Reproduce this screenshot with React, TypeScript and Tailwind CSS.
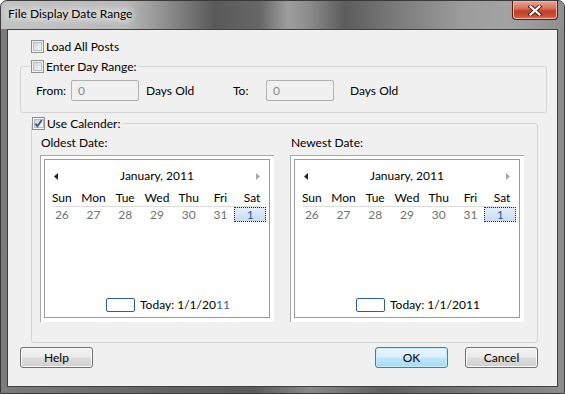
import React from "react";

function Check({ checked = false }: { checked?: boolean }) {
  return (
    <span className="flex h-[13px] w-[13px] shrink-0 border border-[#8e8f8f] bg-[#f4f4f4] p-px">
      <span className="flex flex-1 items-center justify-center border border-[#b9bdc2] bg-[linear-gradient(135deg,#cfd2d7_0%,#e4e6e9_55%,#f8f8f8_100%)]">
        {checked && (
          <svg width="9" height="9" viewBox="0 0 9 9" className="-ml-px -mt-px">
            <path d="M1.3 4.6 L3.4 7.2 L7.8 0.9" fill="none" stroke="#3d5a8f" strokeWidth="1.8" />
          </svg>
        )}
      </span>
    </span>
  );
}

function Input() {
  return (
    <div className="flex h-[21px] w-[68px] items-center rounded-[2px] border border-[#b0b0b0] bg-[#f0f0f0] pl-[6px] text-[#8a8a8a]">
      0
    </div>
  );
}

function Calendar({ label, blueToday }: { label: string; blueToday?: boolean }) {
  const days = ["Sun", "Mon", "Tue", "Wed", "Thu", "Fri", "Sat"];
  const dates = ["26", "27", "28", "29", "30", "31"];
  return (
    <div className="flex w-[234px] flex-col">
      <div className="h-[16px] pl-px leading-[16px]">{label}</div>
      <div className="mt-[4px] h-[167px] border-l border-t border-[#a9a9a9] bg-white pb-[4px] pl-[3px] pr-[4px] pt-[3px]">
        <div className="flex h-full flex-col border border-[#9b9b9b]">
          <div className="mt-[6px] flex h-[20px] items-center px-[9px]">
            <svg width="4" height="7" viewBox="0 0 4 7">
              <path d="M4 0 L0 3.5 L4 7 Z" fill="#222" />
            </svg>
            <div className="flex-1 text-center leading-[20px]">January, 2011</div>
            <svg width="4" height="7" viewBox="0 0 4 7">
              <path d="M0 0 L4 3.5 L0 7 Z" fill="#a8a8a8" />
            </svg>
          </div>
          <div className="mx-px mt-[4px] grid h-[16px] grid-cols-7 leading-[16px]">
            {days.map((d) => (
              <div key={d} className="text-center">
                {d}
              </div>
            ))}
          </div>
          <div className="mx-[8px] h-px bg-[#dcdcdc]" />
          <div className="mx-px grid h-[15px] grid-cols-7 leading-[15px] text-[#707070]">
            {dates.map((d) => (
              <div key={d} className="text-center">
                {d}
              </div>
            ))}
            <div className="-ml-[2px] flex h-[15px] w-[32px] items-center justify-center border border-dotted border-[#2b2b2b] bg-[linear-gradient(#e4eefa,#c9dcf2)] text-[#1f5bb0]">
              1
            </div>
          </div>
          <div className="mb-[5px] mt-auto flex h-[14px] items-center">
            <div className="ml-[61px] h-[14px] w-[29px] rounded-[2px] border border-[#2f5f98]" />
            <div className="ml-[5px] leading-[14px]">
              Today: 1/1/20
              <span className={blueToday ? "text-[#2a5fb0]" : ""}>11</span>
            </div>
          </div>
        </div>
      </div>
    </div>
  );
}

function Button({ children, primary }: { children: React.ReactNode; primary?: boolean }) {
  return (
    <div
      className={
        primary
          ? "flex h-[21px] w-[73px] items-center justify-center rounded-[3px] border border-[#3c7fb1] bg-[linear-gradient(#eaf6fd_0%,#d9f0fc_48%,#bee6fd_52%,#a7d9f5_100%)] shadow-[inset_0_0_0_1px_#c7ecfc]"
          : "flex h-[21px] w-[73px] items-center justify-center rounded-[3px] border border-[#707070] bg-[linear-gradient(#f2f2f2_0%,#ebebeb_48%,#dddddd_52%,#cfcfcf_100%)] shadow-[inset_0_0_0_1px_#fbfbfb]"
      }
    >
      {children}
    </div>
  );
}

export default function App() {
  return (
    <div className="h-[394px] w-[565px] bg-white font-['Lato',sans-serif] text-[12px] text-black">
      <div className="flex h-[394px] w-[565px] flex-col rounded-t-[7px] border border-[#3a3a3a] bg-[linear-gradient(90deg,#7c7c7c_0%,#626262_30%,#5a5a5a_45%,#8a8a8a_55%,#5f5f5f_68%,#7a7a7a_85%,#8c8c8c_100%)]">
        <div className="flex h-[28px] rounded-t-[6px] bg-[linear-gradient(90deg,#c3c3c3_0%,#b9b9b9_22%,#8a8a8a_30%,#595959_38%,#676767_46%,#9e9e9e_51%,#8a8a8a_55%,#5c5c5c_61%,#7a7a7a_70%,#9c9c9c_82%,#a3a3a3_90%,#8f8f8f_100%)]">
          <div className="pl-[7px] pt-[5px] leading-[16px] [text-shadow:0_0_6px_#ffffff,0_0_10px_#ffffff,0_0_14px_#ffffff]">
            File Display Date Range
          </div>
          <div className="ml-auto mr-[6px] flex h-[19px] w-[46px] items-center justify-center rounded-b-[4px] border border-t-0 border-[#5a1d12] bg-[linear-gradient(#e9a596_0%,#d9735f_40%,#c2412a_55%,#c4462e_75%,#dc6e55_100%)] shadow-[inset_0_0_0_1px_#f0b7a8]">
            <svg width="14" height="11" viewBox="0 0 14 11">
              <path d="M2.5 1.5 L11.5 9.5 M11.5 1.5 L2.5 9.5" stroke="#4a1b12" strokeWidth="4" strokeLinecap="square" />
              <path d="M2.5 1.5 L11.5 9.5 M11.5 1.5 L2.5 9.5" stroke="#ffffff" strokeWidth="2.2" strokeLinecap="square" />
            </svg>
          </div>
        </div>
        <div className="mx-[6px] flex h-[358px] flex-col border border-[#404040] bg-[#f0f0f0]">
          <div className="ml-[23px] mt-[10px] flex h-[13px] items-center gap-[2px]">
            <Check />
            <span>Load All Posts</span>
          </div>
          <fieldset className="ml-[12px] mt-[7px] w-[527px] rounded-[3px] border border-[#d3d3d3] pb-[11px]">
            <legend className="ml-[8px] flex h-[13px] items-center gap-[2px] px-[2px]">
              <Check />
              <span>Enter Day Range:</span>
            </legend>
            <div className="mt-[7px] flex h-[21px] items-center pl-[15px]">
              <span className="w-[35px]">From:</span>
              <Input />
              <span className="ml-[7px] w-[87px]">Days Old</span>
              <span className="w-[33px]">To:</span>
              <Input />
              <span className="ml-[16px]">Days Old</span>
            </div>
          </fieldset>
          <fieldset className="ml-[23px] mt-[4px] w-[507px] rounded-[3px] border border-[#d3d3d3] pb-[20px]">
            <legend className="flex h-[13px] items-center gap-[2px] pr-[3px]">
              <Check checked />
              <span>Use Calender:</span>
            </legend>
            <div className="mt-[5px] flex gap-[16px] pl-[8px]">
              <Calendar label="Oldest Date:" blueToday />
              <Calendar label="Newest Date:" />
            </div>
          </fieldset>
          <div className="mt-[4px] flex">
            <div className="ml-[12px]">
              <Button>Help</Button>
            </div>
            <div className="ml-auto mr-[19px] flex gap-[17px]">
              <Button primary>OK</Button>
              <Button>Cancel</Button>
            </div>
          </div>
        </div>
      </div>
    </div>
  );
}
